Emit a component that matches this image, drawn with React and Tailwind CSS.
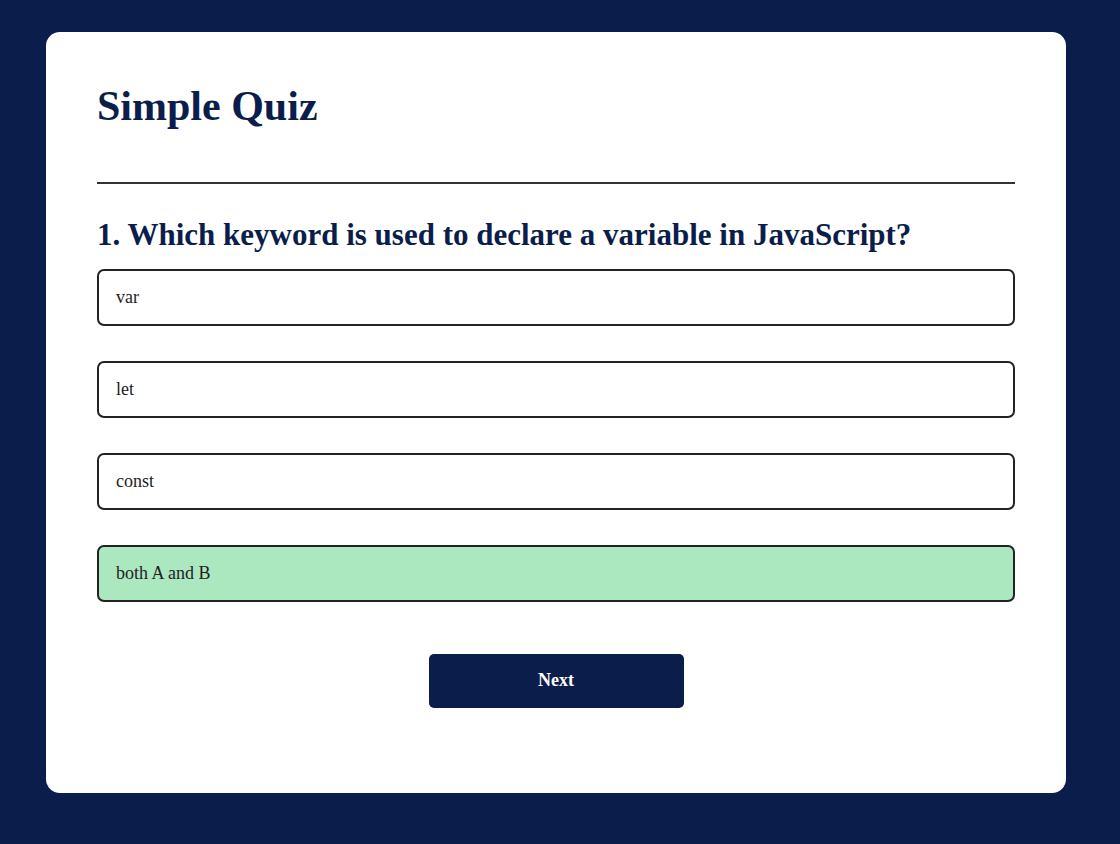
export default function App() {
  const options = ['var', 'let', 'const', 'both A and B']
  const selected = 3

  return (
    <div className="min-h-screen bg-[#0b1e4b] pt-8 pb-[51px]" style={{ fontFamily: '"Liberation Serif", "Times New Roman", serif' }}>
      <div className="ml-[46px] w-[1020px] rounded-[14px] bg-white px-[51px] pt-[50px] pb-[85px]">
        <h1 className="text-[42px] font-bold leading-[1.15] text-[#0b1e4b]">Simple Quiz</h1>
        <div className="mt-[52px] h-[2px] bg-[#333]" />
        <h2 className="mt-[33px] text-[31px] font-bold leading-[1.15] text-[#0b1e4b]">
          1. Which keyword is used to declare a variable in JavaScript?
        </h2>
        <div className="mt-[16px] flex flex-col gap-[35px]">
          {options.map((opt, i) => (
            <button
              key={opt}
              className={`h-[57px] w-full rounded-[7px] border-2 border-[#222] px-[17px] text-left text-[18px] text-[#222] ${i === selected ? 'bg-[#abe8c0]' : 'bg-white'}`}
            >
              {opt}
            </button>
          ))}
        </div>
        <div className="mt-[52px] flex justify-center">
          <button className="h-[54px] w-[255px] rounded-[5px] bg-[#0b1e4b] text-[18px] font-bold text-white">Next</button>
        </div>
      </div>
    </div>
  )
}
